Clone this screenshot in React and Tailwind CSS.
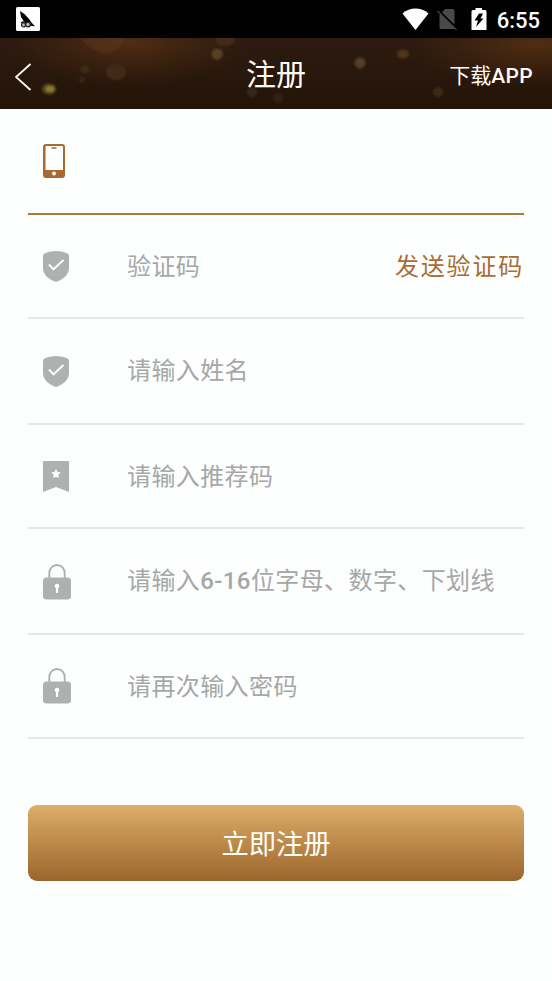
import React from "react";

const SANS = "font-['Roboto','Noto_Sans_CJK_SC',sans-serif]";

function StatusBar() {
  return (
    <div className="flex h-[38px] items-center bg-black pl-4 pr-[12px]">
      <svg width="24" height="24" viewBox="0 0 24 24">
        <rect width="24" height="24" rx="1.5" fill="#fff" />
        <path d="M4 4 8.500 7 13 12 15.500 15.500 19 19.500 14 18.500 8 14.500 5 10Z" fill="#000" />
        <path d="M5 16Q9 13 15 19" fill="none" stroke="#111" strokeWidth="1.300" />
        <circle cx="7.500" cy="18" r="2" fill="#bbb" stroke="#222" strokeWidth="1.200" />
        <circle cx="12" cy="17.500" r="2.300" fill="#bbb" stroke="#222" strokeWidth="1.200" />
      </svg>
      <div className="ml-auto flex items-center">
        <svg className="mr-[8px]" width="27" height="22" viewBox="0 0 28 22" preserveAspectRatio="none">
          <path d="M0.5 5.5C8 -1.3 20 -1.3 27.5 5.5L14 22Z" fill="#fff" />
        </svg>
        <svg width="21" height="23" viewBox="0 0 21 23">
          <path d="M8 1H15.500Q17.500 1 17.500 2.500V21H4Q2.500 21 2.500 20V7Z" fill="#4a4a4a" />
          <path d="M0.500 1.500 20.500 21" stroke="#000" strokeWidth="2.200" />
          <path d="M0.500 3 19.500 22" stroke="#444" strokeWidth="1.300" />
        </svg>
        <svg className="ml-[13px]" width="16" height="22" viewBox="0 0 16 22">
          <path d="M4.500 0H11V2H14Q15.500 2 15.500 3.500V22H0.500V3.500Q0.500 2 2 2H4.500Z" fill="#fff" />
          <path d="M8 5.500H12L9.500 10.500H12.500L5 19 7 12.500H3.500Z" fill="#000" />
        </svg>
        <span className="ml-[10px] pt-[3px] text-[22px] font-medium leading-none text-white">6:55</span>
      </div>
    </div>
  );
}

function HeaderGlow() {
  return (
    <svg className="absolute inset-0" width="552" height="71" viewBox="0 0 552 71">
      <defs>
        <linearGradient id="base" x1="0" y1="0" x2="0" y2="1">
          <stop offset="0" stopColor="#2d1b10" />
          <stop offset="1" stopColor="#241408" />
        </linearGradient>
        <radialGradient id="warm">
          <stop offset="0" stopColor="#673a17" stopOpacity="0.600" />
          <stop offset="1" stopColor="#5c3010" stopOpacity="0" />
        </radialGradient>
        <filter id="soft"><feGaussianBlur stdDeviation="0.900" /></filter>
      </defs>
      <rect width="552" height="71" fill="url(#base)" />
      <ellipse cx="130" cy="4" rx="120" ry="44" fill="url(#warm)" />
      <ellipse cx="535" cy="6" rx="130" ry="44" fill="url(#warm)" />
      <g filter="url(#soft)">
        <path d="M80 0H124Q120 15 105 16 90 13 80 0Z" fill="#6b3f1c" opacity="0.300" />
        <ellipse cx="225" cy="2" rx="10" ry="6" fill="#5a3820" opacity="0.500" />
        <circle cx="217" cy="16" r="5.500" fill="#594027" />
        <ellipse cx="116" cy="34" rx="10" ry="8" fill="#412917" />
        <ellipse cx="85" cy="31" rx="4.500" ry="4" fill="#3f2b1a" />
        <circle cx="82" cy="42" r="3" fill="#3a2818" />
        <ellipse cx="49" cy="51" rx="7" ry="5.500" fill="#52471a" />
        <ellipse cx="50" cy="51" rx="4.500" ry="3" fill="#8b7b35" />
        <circle cx="252" cy="54" r="5" fill="#37271a" />
        <circle cx="278" cy="60" r="5" fill="#302014" />
        <circle cx="360" cy="25" r="5.500" fill="#543c26" />
        <ellipse cx="403" cy="16" rx="6" ry="4.500" fill="#50361e" />
        <circle cx="438" cy="54" r="5" fill="#3e2919" />
      </g>
    </svg>
  );
}

function Header() {
  return (
    <header className="relative h-[71px] overflow-hidden">
      <HeaderGlow />
      <div className="relative grid h-full grid-cols-3 items-center pl-[15px] pr-[19px] text-[#fffaf4]">
        <svg className="mt-[7px]" width="17" height="28" viewBox="0 0 17 28">
          <path d="M15.500 1 1 14 15.500 27" fill="none" stroke="currentColor" strokeWidth="1.800" />
        </svg>
        <h1 className="pl-[4px] pt-[2px] text-center text-[30px] leading-[44px]">注册</h1>
        <span className="whitespace-nowrap pt-[5px] text-right text-[21px] leading-[30px]">
          下载<span className="font-medium tracking-[0.3px]">APP</span>
        </span>
      </div>
    </header>
  );
}

function PhoneIcon() {
  return (
    <svg width="22" height="34" viewBox="0 0 22 34">
      <path fillRule="evenodd" d="M3 0H19Q22 0 22 3V31Q22 34 19 34H3Q0 34 0 31V3Q0 0 3 0ZM3.500 2Q2.500 2 2.500 3V26H20V3Q20 2 19 2Z" fill="#a86a30" />
      <path d="M8.500 4H13.500" stroke="#a86a30" strokeWidth="1.500" />
      <circle cx="11" cy="29.500" r="1.900" fill="#fff" />
    </svg>
  );
}

function ShieldIcon() {
  return (
    <svg width="26" height="31" viewBox="0 0 26 31">
      <path d="M13 0C17 0 22 1 24.500 2.500Q26 3 26 5V17C26 24 20 28.500 13 31C6 28.500 0 24 0 17V5Q0 3 1.500 2.500C4 1 9 0 13 0Z" fill="#afb0b0" />
      <path d="M6 13.500 10.500 18.300 20.500 9" fill="none" stroke="#fff" strokeWidth="1.900" />
    </svg>
  );
}

function BookmarkIcon() {
  return (
    <svg width="26" height="31" viewBox="0 0 26 31">
      <path d="M1 0H25Q26 0 26 1V31L13 26 0 31V1Q0 0 1 0Z" fill="#afb0b0" />
      <path d="M13 7.800 14.500 10.900 17.700 11.400 15.400 13.800 15.900 17.200 13 15.700 10.100 17.200 10.600 13.800 8.300 11.400 11.500 10.900Z" fill="#fff" />
    </svg>
  );
}

function LockIcon() {
  return (
    <svg width="28" height="36" viewBox="0 0 28 36">
      <path d="M6.300 14V9A7.700 8 0 0 1 21.700 9V14" fill="none" stroke="#afb0b0" strokeWidth="1.900" />
      <rect y="13.500" width="28" height="22" rx="3.500" fill="#afb0b0" />
      <circle cx="14" cy="22" r="2.300" fill="#fff" />
      <path d="M14 22V29" stroke="#fff" strokeWidth="2.200" />
    </svg>
  );
}

const ROW = {
  active: "flex h-[106px] items-center border-b-2 border-[#a5793f] pl-[15px]",
  short: "flex h-[104px] items-center border-b-2 border-[#e6e8e8] pl-[15px]",
  tall: "flex h-[106px] items-center border-b-2 border-[#e4e6e6] pl-[15px]",
};

const LABEL = {
  active: "whitespace-nowrap text-[24px] leading-[36px] tracking-[0.4px] text-[#a6a7a7]",
  short: "whitespace-nowrap pt-[2px] text-[24px] leading-[36px] tracking-[0.4px] text-[#a6a7a7]",
  tall: "whitespace-nowrap text-[24px] leading-[36px] tracking-[0.4px] text-[#a6a7a7]",
};

function Field({ icon, children, action, row }) {
  return (
    <div className={ROW[row]}>
      <div className="flex w-[84px] shrink-0">{icon}</div>
      <div className={LABEL[row]}>{children}</div>
      {action}
    </div>
  );
}

export default function App() {
  return (
    <div className={`h-[981px] w-[552px] overflow-hidden bg-[#fdfefe] ${SANS}`}>
      <StatusBar />
      <Header />
      <main className="px-7">
        <Field row="active" icon={<PhoneIcon />} />
        <Field
          row="short"
          icon={<ShieldIcon />}
          action={
            <button className="ml-auto whitespace-nowrap pt-[2px] text-[24px] leading-[36px] tracking-[1.8px] text-[#a86c35]">
              发送验证码
            </button>
          }
        >
          验证码
        </Field>
        <Field row="tall" icon={<ShieldIcon />}>请输入姓名</Field>
        <Field row="short" icon={<BookmarkIcon />}>请输入推荐码</Field>
        <Field row="tall" icon={<div className="pt-[2px]"><LockIcon /></div>}>
          请输入<span className="font-medium">6-16</span>位字母、数字、下划线
        </Field>
        <Field row="short" icon={<LockIcon />}>请再次输入密码</Field>
        <button className="mt-[66px] block h-[76px] w-full rounded-[9px] bg-linear-to-b from-[#dcae6b] to-[#9c662a] pt-[5px] text-[27.3px] text-[#fffdf8]">
          立即注册
        </button>
      </main>
    </div>
  );
}
